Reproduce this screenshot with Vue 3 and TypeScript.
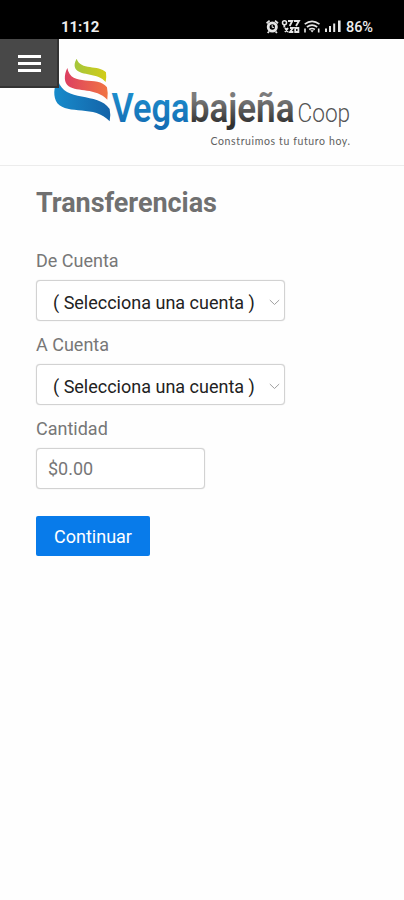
<script setup lang="ts">
import { ref } from 'vue'

interface AccountField {
  id: string
  label: string
}

const accounts: AccountField[] = [
  { id: 'from', label: 'De Cuenta' },
  { id: 'to', label: 'A Cuenta' },
]
const placeholder = '( Selecciona una cuenta )'
const amount = ref('')
</script>

<template>
  <div class="screen">
    <div class="status">
      <span class="clock">11:12</span>
      <svg class="indicators" width="78" height="18" viewBox="265 18 78 18">
        <g fill="none" stroke="#e6e6e6">
          <circle cx="272.3" cy="27" r="4.1" stroke-width="2.8" />
          <path d="M266.6 23.2l3-2.6M278 23.2l-3-2.6M269 31.5l-1.3 1.5M275.6 31.5l1.3 1.5" stroke-width="1.8" />
          <path d="M272.2 24.8v2.6h2" stroke-width="1" />
          <circle cx="284.5" cy="22.8" r="2" stroke-width="1.5" />
          <path d="M284.3 25v2.4M288 21h4.3l-2.6 5M294 21h5l-3 5M285 28l3 4M288 28l-3 4M290 28h3l-3 4h3.4M295.2 28v4h3.2v-4z" stroke-width="1.8" />
          <path d="M304.7 24.2q7.3-5.7 14.8 0M306.9 27q5.1-3.8 10.3 0M309.2 29.5q2.8-2 5.7 0" stroke-width="1.6" />
          <path d="M305 28.5v4M318.7 28.5v4" stroke-width="1.6" />
        </g>
        <g fill="#e6e6e6">
          <path d="M310.3 30.3h3.6l-1.8 2.2z" />
          <rect x="325" y="28.5" width="2" height="3.5" />
          <rect x="329" y="26" width="2" height="6" />
          <rect x="333.2" y="23.5" width="2" height="8.5" />
          <rect x="338" y="20.5" width="2.6" height="11.5" />
        </g>
      </svg>
      <span class="battery">86%</span>
    </div>

    <header class="header">
      <svg class="logo" width="310" height="105" viewBox="50 50 310 105" role="img" aria-label="Vegabajeña Coop">
        <defs>
          <linearGradient id="lime" x1="0" x2="1">
            <stop offset="0" stop-color="#a4c63c" />
            <stop offset="1" stop-color="#d2cc18" />
          </linearGradient>
          <linearGradient id="coral" x1="0" x2="1">
            <stop offset="0" stop-color="#dc3f62" />
            <stop offset="1" stop-color="#f17442" />
          </linearGradient>
          <linearGradient id="sea" x1="0" x2="1">
            <stop offset="0" stop-color="#178bcb" />
            <stop offset="1" stop-color="#1463a8" />
          </linearGradient>
          <linearGradient id="azure" x1="0" y1="0" x2="0" y2="1">
            <stop offset="0" stop-color="#2196d3" />
            <stop offset="1" stop-color="#1168b0" />
          </linearGradient>
          <linearGradient id="slate" x1="0" y1="0" x2="0" y2="1">
            <stop offset="0.3" stop-color="#7c7c7c" />
            <stop offset="0.85" stop-color="#303030" />
          </linearGradient>
        </defs>
        <g transform="translate(50 50) scale(.3333)">
          <path fill="url(#lime)" d="M80 26C72 40 72 51 79 59C94 77 145 68 167 96Q170 82 168 67C146 43 91 62 80 26Z" />
          <path fill="url(#coral)" d="M52 54C41 77 42 98 56 109C83 127 137 113 172 149Q175 130 171 112C144 74 63 114 52 54Z" />
          <path fill="url(#sea)" d="M24 91C10 111 9 142 22 160C54 196 134 164 179 214Q183 195 179 177C143 124 43 160 24 91Z" />
        </g>
        <g class="wordmark">
          <text transform="translate(111.5 122) scale(.83 1)" textLength="94" lengthAdjust="spacingAndGlyphs" fill="url(#azure)">Vega</text>
          <text transform="translate(189.7 122) scale(.845 1)" textLength="124" lengthAdjust="spacingAndGlyphs" fill="url(#slate)">bajeña</text>
        </g>
        <text class="coop" transform="translate(297.5 122) scale(.87 1)" textLength="60.5" lengthAdjust="spacingAndGlyphs">Coop</text>
        <text class="tagline" x="210.5" y="144.7" textLength="139.5">Construimos tu futuro hoy.</text>
      </svg>
      <button class="menu" aria-label="Menú"><i></i><i></i><i></i></button>
    </header>

    <main class="content">
      <h1>Transferencias</h1>
      <div v-for="field in accounts" :key="field.id" class="field">
        <label :for="field.id">{{ field.label }}</label>
        <button :id="field.id" class="box select">
          <span>{{ placeholder }}</span>
          <svg width="11" height="7" viewBox="0 0 11 7"><path d="M.8 1l4.7 4.5L10.2 1" fill="none" stroke="#a0a0a0" /></svg>
        </button>
      </div>
      <div class="field">
        <label for="amount">Cantidad</label>
        <input id="amount" v-model="amount" class="box amount" placeholder="$0.00" />
      </div>
      <button class="submit">Continuar</button>
    </main>
  </div>
</template>

<style>
body {
  background: #fefefe;
}
</style>

<style scoped>
.screen {
  min-height: 900px;
  background: #fefefe;
  font-family: Roboto, sans-serif;
  color: #777;
}
button,
input {
  margin: 0;
  font-family: inherit;
}
.status {
  display: flex;
  align-items: center;
  box-sizing: border-box;
  height: 39px;
  padding: 15px 30px 0 61px;
  background: #000;
  color: #eee;
}
.clock {
  font-size: 15px;
  font-weight: 700;
  letter-spacing: -0.1px;
}
.indicators {
  margin-left: auto;
}
.battery {
  width: 28px;
  margin-left: 3px;
  font-size: 14.5px;
  font-weight: 500;
  letter-spacing: -0.1px;
}
.header {
  position: relative;
  box-sizing: border-box;
  height: 127px;
  padding: 11px 0 0 50px;
  border-bottom: 1px solid #ececec;
}
.logo {
  display: block;
}
.wordmark {
  font-size: 41.5px;
  font-weight: 600;
}
.coop {
  font-size: 26px;
  font-weight: 300;
  fill: #555;
}
.tagline {
  font-family: Lato, sans-serif;
  font-size: 10.5px;
  fill: #606060;
}
.menu {
  position: absolute;
  top: 0;
  left: 0;
  display: flex;
  flex-direction: column;
  gap: 4px;
  width: 59px;
  height: 49px;
  padding: 16px 0 0 18px;
  border: solid #333;
  border-width: 0 2px 2px 0;
  background: #484848;
}
.menu i {
  width: 23px;
  height: 3px;
  background: #fff;
}
.content {
  padding: 20px 36px 0;
}
h1 {
  margin: 0 0 30px;
  font-size: 27px;
  font-weight: 700;
  line-height: 34px;
  letter-spacing: -0.05px;
  color: #707070;
}
.field {
  margin-bottom: 13px;
}
.field label {
  display: block;
  height: 30px;
  font-size: 18px;
  line-height: 22px;
}
.box {
  box-sizing: border-box;
  height: 41px;
  border: 1.5px solid #d2d2d2;
  border-radius: 4px;
  background: #fff;
  box-shadow: 0 0 1px #ccc;
}
.select {
  display: flex;
  align-items: center;
  justify-content: space-between;
  width: 249px;
  padding: 3px 4px 0 16px;
  font-size: 18px;
  color: #222;
}
.amount {
  display: block;
  width: 169px;
  padding: 0 11px;
  font-size: 18px;
}
.amount::placeholder {
  color: #777;
}
.submit {
  display: block;
  width: 114px;
  height: 40px;
  margin-top: 27px;
  padding: 0;
  border: 0;
  border-radius: 2px;
  background: #087bea;
  color: #fff;
  font-size: 18px;
}
</style>
